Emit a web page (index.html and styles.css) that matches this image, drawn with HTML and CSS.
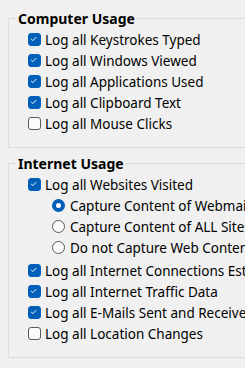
FILE: index.html
```html
<!DOCTYPE html>
<html lang="en">
<head>
<meta charset="UTF-8">
<meta name="viewport" content="width=device-width, initial-scale=1.0">
<title>Monitoring Options</title>
<link rel="stylesheet" href="styles.css">
</head>
<body>

<div class="panel">
    <fieldset class="group">
        <legend>Computer Usage</legend>
        <ul class="options">
            <li class="opt"><span class="box on"><svg viewBox="0 0 13 13"><path d="M3.5 6.8 L5.6 8.8 L9.6 4.6"/></svg></span>Log all Keystrokes Typed</li>
            <li class="opt"><span class="box on"><svg viewBox="0 0 13 13"><path d="M3.5 6.8 L5.6 8.8 L9.6 4.6"/></svg></span>Log all Windows Viewed</li>
            <li class="opt"><span class="box on"><svg viewBox="0 0 13 13"><path d="M3.5 6.8 L5.6 8.8 L9.6 4.6"/></svg></span>Log all Applications Used</li>
            <li class="opt"><span class="box on"><svg viewBox="0 0 13 13"><path d="M3.5 6.8 L5.6 8.8 L9.6 4.6"/></svg></span>Log all Clipboard Text</li>
            <li class="opt"><span class="box"></span>Log all Mouse Clicks</li>
        </ul>
    </fieldset>

    <fieldset class="group">
        <legend>Internet Usage</legend>
        <ul class="options">
            <li class="opt"><span class="box on"><svg viewBox="0 0 13 13"><path d="M3.5 6.8 L5.6 8.8 L9.6 4.6"/></svg></span>Log all Websites Visited</li>
            <li class="opt sub"><span class="radio on"></span>Capture Content of Webmail Sites Only</li>
            <li class="opt sub"><span class="radio"></span>Capture Content of ALL Sites</li>
            <li class="opt sub last"><span class="radio"></span>Do not Capture Web Content</li>
            <li class="opt"><span class="box on"><svg viewBox="0 0 13 13"><path d="M3.5 6.8 L5.6 8.8 L9.6 4.6"/></svg></span>Log all Internet Connections Established</li>
            <li class="opt"><span class="box on"><svg viewBox="0 0 13 13"><path d="M3.5 6.8 L5.6 8.8 L9.6 4.6"/></svg></span>Log all Internet Traffic Data</li>
            <li class="opt"><span class="box on"><svg viewBox="0 0 13 13"><path d="M3.5 6.8 L5.6 8.8 L9.6 4.6"/></svg></span>Log all E-Mails Sent and Received</li>
            <li class="opt"><span class="box"></span>Log all Location Changes</li>
        </ul>
    </fieldset>

    <fieldset class="group">
        <legend>File Activity</legend>
        <ul class="options">
            <li class="opt"><span class="box"></span>Log all File Changes</li>
        </ul>
    </fieldset>
</div>

</body>
</html>
```

FILE: styles.css
```css
html, body {
    margin: 0;
    padding: 0;
    background-color: #f0f0f0;
    overflow: hidden;
}

body {
    font-family: "Noto Sans", "Open Sans", sans-serif;
    font-size: 13.5px;
    color: #000;
}

.panel {
    width: 320px;
    padding: 11px 0 0 8px;
}

.group {
    margin: 0 0 8px 0;
    padding: 0 0 13px 0;
    border: 1px solid #dcdcdc;
    border-right: none;
    min-width: 0;
}

.group legend {
    margin-left: 7px;
    padding: 0 2px;
    font-weight: bold;
    font-size: 14px;
    line-height: 15px;
}

.options {
    list-style: none;
    margin: 0;
    padding: 3px 0 0 19px;
}

.opt {
    display: flex;
    align-items: center;
    height: 21px;
    white-space: nowrap;
}

.opt.sub {
    padding-left: 24px;
}

.opt.last {
    margin-bottom: 2px;
}

.box {
    flex: none;
    box-sizing: border-box;
    width: 13px;
    height: 13px;
    margin-right: 4px;
    border: 1px solid #5a5a5a;
    border-radius: 3px;
    background-color: #fbfbfb;
}

.box.on {
    border-color: #005fb8;
    background-color: #005fb8;
}

.box svg {
    display: block;
    width: 11px;
    height: 11px;
}

.box path {
    fill: none;
    stroke: #fff;
    stroke-width: 1.1;
    transform: translate(-1px, -1px);
}

.radio {
    flex: none;
    box-sizing: border-box;
    width: 13px;
    height: 13px;
    margin-right: 5px;
    border: 1px solid #5a5a5a;
    border-radius: 50%;
    background-color: #fbfbfb;
}

.radio.on {
    border: 4px solid #005fb8;
    background-color: #fff;
}
```
